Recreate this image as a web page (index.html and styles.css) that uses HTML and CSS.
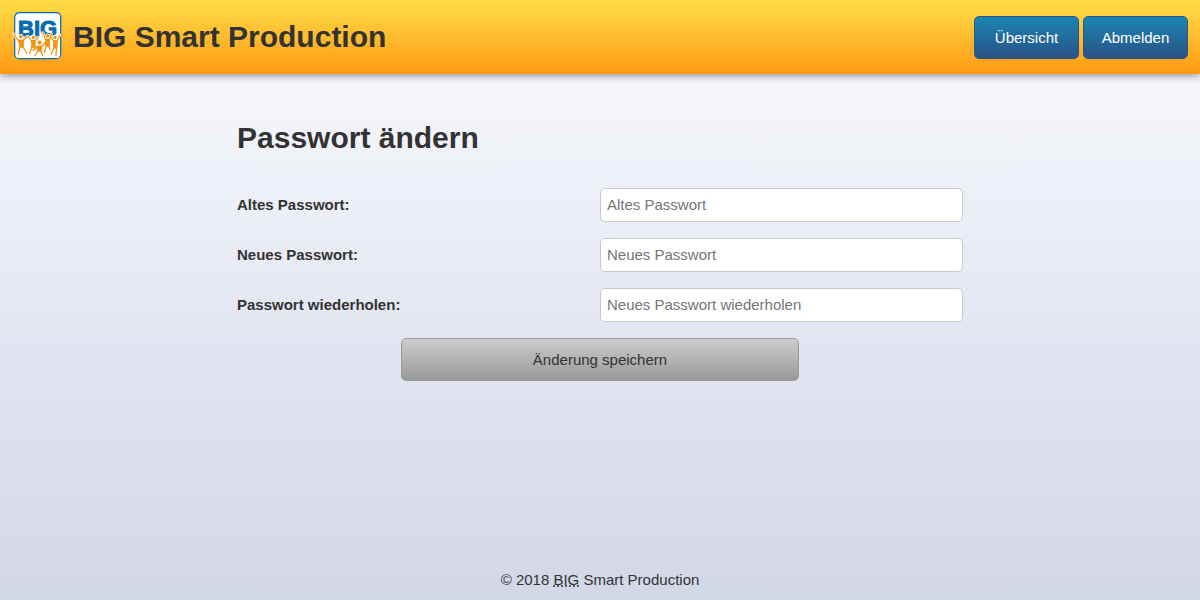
FILE: index.html
```html
<!DOCTYPE html>
<html lang="de">
<head>
<meta charset="utf-8">
<title>BIG Smart Production</title>
<link rel="stylesheet" href="styles.css">
</head>
<body>
<header class="header">
  <div class="brand">
    <svg class="logo" viewBox="0 0 50 48" role="img" aria-label="Logo">
      <rect class="logo-frame" x="2.7" y=".7" width="46" height="46" rx="4.5"/>
      <text class="logo-text" x="6" y="23.500">BIG</text>
      <g class="people-outline">
        <use href="#people"/>
      </g>
      <g class="people">
        <g id="people">
          <path d="M1.500 21.500L6 28.500H11L15 24.500M7 29L8 35L6 42.500M11 29L11 35L15 41.500"/>
          <path d="M16 24L19.500 29H23L26 25M20 29L20 35L17.500 41.500M23 29L22.500 35L24 37"/>
          <path d="M21 38.500L24.500 34.500H30L33 31M25.500 35L26 39L23 43.500M29.500 35L28.500 39L31 44"/>
          <path d="M31 20.500L33.500 27.500H37.500L39.500 21.500M34 28L34 34L32.500 40.500M37 28L37 34L38 37.500"/>
          <path d="M39 25L41.500 29H45L48 23M42 29L42 36L39 42.500M45 29L44.500 36L44 43.500"/>
          <path class="solid" d="M7 28.500H11V35H8ZM20 29H23L22.500 35H20ZM25.500 34.500H29.500L28.500 39H26ZM34 28H37V34H34ZM42 29H45L44.500 36H42Z"/>
          <g class="solid">
            <circle cx="9" cy="24.500" r="1.200"/><circle cx="21.500" cy="25.500" r="1.100"/><circle cx="27.500" cy="30.500" r="1.400"/><circle cx="35.500" cy="24" r="1.100"/><circle cx="43" cy="25.500" r="1.100"/>
          </g>
        </g>
      </g>
    </svg>
    <span class="brand-name">BIG Smart Production</span>
  </div>
  <nav class="nav">
    <a class="nav-button" href="#">Übersicht</a>
    <a class="nav-button" href="#">Abmelden</a>
  </nav>
</header>
<main class="content">
  <h1 class="title">Passwort ändern</h1>
  <form class="form">
    <div class="row">
      <label class="label" for="old">Altes Passwort:</label>
      <input class="input" id="old" type="password" placeholder="Altes Passwort">
    </div>
    <div class="row">
      <label class="label" for="new">Neues Passwort:</label>
      <input class="input" id="new" type="password" placeholder="Neues Passwort">
    </div>
    <div class="row">
      <label class="label" for="repeat">Passwort wiederholen:</label>
      <input class="input" id="repeat" type="password" placeholder="Neues Passwort wiederholen">
    </div>
    <button class="submit" type="submit">Änderung speichern</button>
  </form>
</main>
<footer class="footer">© 2018 <abbr class="abbr" title="BIG">BIG</abbr> Smart Production</footer>
</body>
</html>
```
FILE: styles.css
```css
* {
  box-sizing: border-box;
}

body {
  display: flex;
  flex-direction: column;
  min-height: 100vh;
  margin: 0;
  color: #333;
  background: linear-gradient(#fafbfd 0%, #ebeef6 37%, #e4e6f2 53%, #d2d7e8 100%);
  font: 15px/20px "Liberation Sans", Arial, sans-serif;
}

.header {
  display: flex;
  align-items: center;
  justify-content: space-between;
  padding: 12px;
  background: linear-gradient(#ffdd48, #ff9913);
  box-shadow: 0 2px 8px rgba(0, 0, 0, 0.4);
}

.brand {
  display: flex;
  align-items: flex-start;
  gap: 11px;
}

.logo {
  width: 50px;
  height: 48px;
}

.logo-frame {
  fill: #fff;
  stroke: #0a6cab;
  stroke-width: 1.2;
}

.logo-text {
  fill: #0a6cab;
  stroke: #0a6cab;
  stroke-width: 1;
  font: bold 22px "Liberation Sans", Arial, sans-serif;
}

.people,
.people-outline {
  fill: none;
  stroke-linecap: round;
  stroke-linejoin: round;
}

.people {
  stroke: #f39410;
  stroke-width: 1.3;
}

.people-outline {
  stroke: #fff;
  stroke-width: 2.6;
}

.solid {
  fill: #f39410;
}

.brand-name {
  font-size: 30px;
  font-weight: bold;
  line-height: 50px;
}

.nav {
  display: flex;
  gap: 4px;
}

.nav-button {
  width: 105px;
  padding: 11px 0 10px;
  border: 1px solid #265788;
  border-radius: 5px;
  color: #fff;
  background: linear-gradient(#1c85b2, #285288);
  text-align: center;
  text-decoration: none;
}

.content {
  flex: 1;
  width: 100%;
  max-width: 726px;
  margin: 0 auto;
  padding-top: 44px;
}

.title {
  margin: 0 0 30px;
  font-size: 30px;
  line-height: 40px;
}

.form {
  display: grid;
  gap: 16px;
}

.row {
  display: grid;
  grid-template-columns: 1fr 1fr;
  align-items: center;
}

.label {
  font-weight: bold;
}

.input {
  width: 100%;
  height: 34px;
  padding: 6px 6px 8px;
  border: 1px solid #c8c8c8;
  border-radius: 5px;
  color: #333;
  background: #fff;
  font: inherit;
}

.input::placeholder {
  color: #757575;
}

.submit {
  justify-self: center;
  width: 100%;
  max-width: 398px;
  padding: 11px 11px 10px;
  border: 1px solid #999;
  border-radius: 5px;
  color: #333;
  background: linear-gradient(#ccc, #999);
  font: inherit;
}

.footer {
  padding: 10px;
  text-align: center;
}

.abbr {
  text-decoration: underline dotted;
}
```
